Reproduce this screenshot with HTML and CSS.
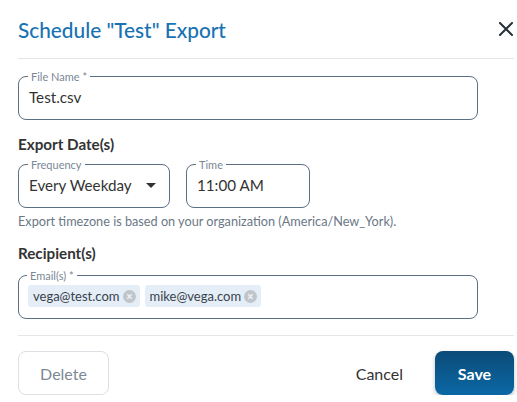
FILE: index.html
```html
<!DOCTYPE html>
<html lang="en">
<head>
  <meta charset="UTF-8">
  <title>Schedule Export</title>
  <link rel="stylesheet" href="styles.css">
</head>
<body>
  <div class="dialog">
    <header class="dialog-header">
      <h1>Schedule "Test" Export</h1>
      <button class="close" aria-label="Close">
        <svg width="14" height="14" viewBox="0 0 14 14"><path d="M1 1L13 13M13 1L1 13" stroke="#263238" stroke-width="2" stroke-linecap="square"/></svg>
      </button>
    </header>

    <div class="dialog-body">
      <fieldset class="field field-wide">
        <legend>File Name *</legend>
        <span class="value">Test.csv</span>
      </fieldset>

      <h2>Export Date(s)</h2>
      <div class="row">
        <fieldset class="field field-freq">
          <legend>Frequency</legend>
          <span class="value">Every Weekday</span>
          <svg class="caret" width="10" height="5" viewBox="0 0 10 5"><path d="M0 0H10L5 5Z" fill="#333"/></svg>
        </fieldset>
        <fieldset class="field field-time">
          <legend>Time</legend>
          <span class="value">11:00 AM</span>
        </fieldset>
      </div>
      <p class="hint">Export timezone is based on your organization (America/New_York).</p>

      <h2 class="recipients">Recipient(s)</h2>
      <fieldset class="field field-wide field-chips">
        <legend>Email(s) *</legend>
        <span class="chip">vega@test.com <svg width="13" height="13" viewBox="0 0 12 12"><circle cx="6" cy="6" r="6" fill="#bfc5cb"/><path d="M4 4L8 8M8 4L4 8" stroke="#eef2f5" stroke-width="1.3"/></svg></span>
        <span class="chip">mike@vega.com <svg width="13" height="13" viewBox="0 0 12 12"><circle cx="6" cy="6" r="6" fill="#bfc5cb"/><path d="M4 4L8 8M8 4L4 8" stroke="#eef2f5" stroke-width="1.3"/></svg></span>
      </fieldset>
    </div>

    <footer class="dialog-footer">
      <button class="btn btn-outline">Delete</button>
      <div class="actions">
        <button class="btn btn-text">Cancel</button>
        <button class="btn btn-primary">Save</button>
      </div>
    </footer>
  </div>
</body>
</html>
```

FILE: styles.css
```css
body {
  margin: 0;
  font-family: 'Lato', 'Open Sans', sans-serif;
  color: #333;
  background: #fff;
}

.dialog {
  width: 496px;
  padding: 0 3px 0 18px;
}

.dialog-header {
  display: flex;
  align-items: center;
  justify-content: space-between;
  height: 58px;
  border-bottom: 1px solid #e3e6e9;
}

h1 {
  margin: 0;
  font-size: 20.8px;
  font-weight: 500;
  color: #1872b4;
}

.close {
  border: 0;
  background: none;
  padding: 0;
  margin-right: 1px;
  display: flex;
}

.dialog-body {
  padding-top: 12px;
  padding-bottom: 16px;
  border-bottom: 1px solid #e3e6e9;
}

.field {
  margin: 0;
  border: 1px solid #5a6e84;
  border-radius: 8px;
  padding: 0 10px;
  height: 49px;
  box-sizing: border-box;
  display: flex;
  align-items: center;
}

.field legend {
  font-size: 11px;
  color: #7a8796;
  padding: 0 3px;
  margin-left: -1px;
  line-height: 11px;
}

.field .value {
  font-size: 15.2px;
  color: #333;
  margin-top: -7px;
}

.field-wide {
  width: 460px;
}

.row {
  display: flex;
  gap: 16px;
}

.field-freq {
  width: 152px;
  justify-content: space-between;
}

.field-freq .caret {
  margin-top: -7px;
  margin-right: 3px;
}

.field-time {
  width: 124px;
}

h2 {
  font-size: 15.2px;
  font-weight: 700;
  color: #333;
  margin: 15px 0 6px;
}

h2.recipients {
  margin-bottom: 8px;
}

.hint {
  font-size: 12.7px;
  color: #6b7785;
  margin: 5px 0 15px;
}

.field-chips {
  gap: 5px;
  padding-left: 9px;
}

.chip {
  display: inline-flex;
  align-items: center;
  gap: 3px;
  background: #e5eef6;
  border-radius: 3px;
  font-size: 13px;
  color: #37424d;
  padding: 0 4px 0 5px;
  height: 22px;
  margin-top: -7px;
}

.dialog-footer {
  display: flex;
  justify-content: space-between;
  align-items: center;
  padding-top: 15px;
}

.actions {
  display: flex;
  align-items: center;
  gap: 32px;
}

.btn {
  font-family: inherit;
  font-size: 16px;
  height: 44px;
  border-radius: 8px;
  cursor: pointer;
}

.btn-outline {
  width: 91px;
  background: #fff;
  border: 1px solid #dcdfe3;
  color: #7d8896;
}

.btn-text {
  border: 0;
  background: none;
  color: #333;
  padding: 0;
}

.btn-primary {
  width: 79px;
  border: 0;
  color: #fff;
  font-weight: 700;
  background: linear-gradient(#0b4b78, #0b68a5);
  box-shadow: 0 2px 4px rgba(0, 0, 0, 0.25);
}
```
